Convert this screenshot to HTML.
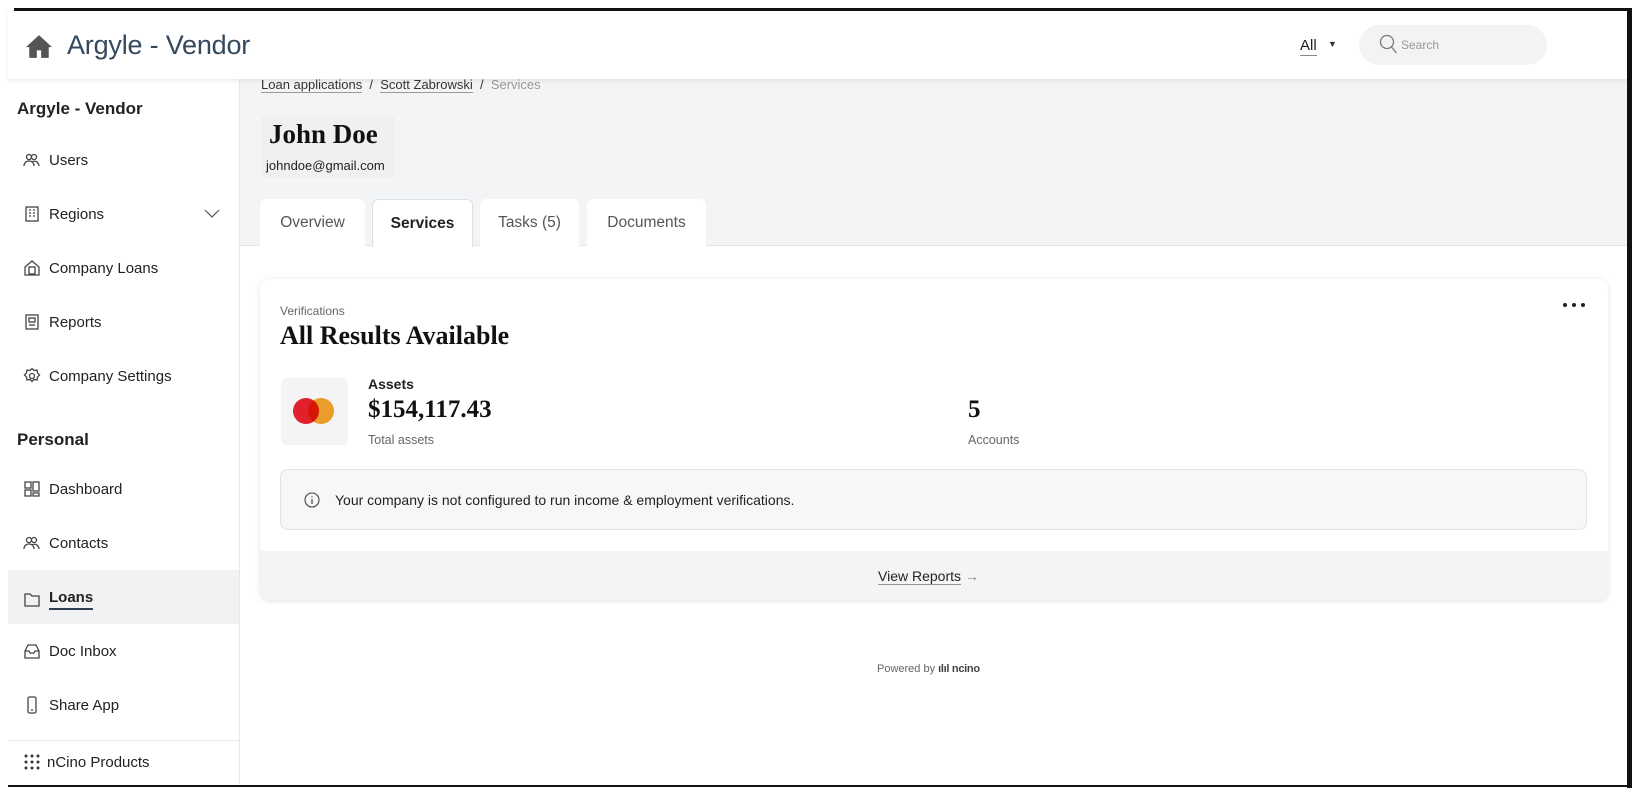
<!DOCTYPE html>
<html><head><meta charset="utf-8"><style>
*{box-sizing:border-box;margin:0;padding:0}
body{width:1640px;height:796px;background:#fff;font-family:"Liberation Sans",sans-serif;color:#222;position:relative;overflow:hidden}
.abs{position:absolute}
.frameT{left:14px;top:8px;width:1618px;height:3px;background:#111}
.frameR{left:1627px;top:8px;width:5px;height:780px;background:#111}
.frameB{left:8px;top:785px;width:1624px;height:2px;background:#111}
.header{left:8px;top:11px;width:1619px;height:68px;background:#fff;box-shadow:0 2px 4px rgba(0,0,0,.08);z-index:3}
.side{left:8px;top:79px;width:232px;height:706px;background:#fff;border-right:1px solid #e8e8e8;z-index:2}
.main{left:240px;top:79px;width:1387px;height:706px;background:#fff}
.gray{left:240px;top:79px;width:1387px;height:167px;background:#f3f4f6;border-bottom:1px solid #e2e4e8}
.si{position:absolute;left:15px;font-size:15px;color:#222;display:flex;align-items:center;gap:8px}
.si svg{width:18px;height:18px;fill:none;stroke:#444;stroke-width:1.3}
.tab{position:absolute;top:199px;height:47px;background:#fff;border-radius:6px 6px 0 0;font-size:15.5px;color:#555;display:flex;align-items:center;justify-content:center}
.card{left:260px;top:279px;width:1348px;height:321px;background:#fff;border-radius:10px;box-shadow:0 1px 6px rgba(0,0,0,.12);overflow:hidden}
.serif{font-family:"Liberation Serif",serif;font-weight:bold}
</style></head><body>
<div class="abs main"></div>
<div class="abs gray"></div>
<div class="abs header">
  <svg class="abs" style="left:18px;top:23px" width="26" height="24" viewBox="0 0 24 22"><path d="M12 1L0 12h3v10h7v-7h4v7h7V12h3z" fill="#555"/></svg>
  <div class="abs" style="left:59px;top:19px;font-size:27px;color:#34495e;font-weight:300;letter-spacing:-.2px">Argyle - Vendor</div>
  <div class="abs" style="left:1292px;top:26px;font-size:15px;color:#222;border-bottom:1px solid #888;line-height:18px">All</div>
  <div class="abs" style="left:1320px;top:28px;font-size:9px;color:#333">▼</div>
  <div class="abs" style="left:1351px;top:14px;width:188px;height:40px;background:#f3f3f3;border-radius:20px"></div>
  <svg class="abs" style="left:1371px;top:23px" width="20" height="22" viewBox="0 0 20 22"><circle cx="8" cy="8" r="6.5" fill="none" stroke="#777" stroke-width="1.3"/><path d="M12.5 13l5 6" stroke="#777" stroke-width="1.3"/></svg>
  <div class="abs" style="left:1393px;top:27px;font-size:12px;color:#999">Search</div>
</div>
<div class="abs side">
  <div class="abs" style="left:9px;top:20px;font-size:17px;font-weight:bold;color:#222">Argyle - Vendor</div>
  <div class="si" style="top:72px"><svg viewBox="0 0 18 18"><circle cx="6" cy="6" r="2.5"/><circle cx="11" cy="6" r="2.5"/><path d="M1 15c0-3 2-5 5-5s5 2 5 5M9 11c1-1 4-1 5 0s2 2 2 4"/></svg>Users</div>
  <div class="si" style="top:126px"><svg viewBox="0 0 18 18"><rect x="3" y="2" width="12" height="14"/><path d="M6 5h2M10 5h2M6 8h2M10 8h2M6 11h2M10 11h2"/></svg>Regions</div>
  <svg class="abs" style="left:196px;top:130px" width="16" height="10" viewBox="0 0 16 10"><path d="M1 1l7 7 7-7" fill="none" stroke="#555" stroke-width="1.2"/></svg>
  <div class="si" style="top:180px"><svg viewBox="0 0 18 18"><path d="M2 8l7-6 7 6v8H2z"/><rect x="6" y="8" width="6" height="7"/></svg>Company Loans</div>
  <div class="si" style="top:234px"><svg viewBox="0 0 18 18"><rect x="3" y="2" width="12" height="14"/><rect x="6" y="5" width="6" height="4"/><path d="M6 12h6"/></svg>Reports</div>
  <div class="si" style="top:288px"><svg viewBox="0 0 18 18"><circle cx="9" cy="9" r="2.5"/><path d="M9 1.5l2 2 3-.5.5 3 2 2-2 2-.5 3-3-.5-2 2-2-2-3 .5-.5-3-2-2 2-2 .5-3 3 .5z"/></svg>Company Settings</div>
  <div class="abs" style="left:9px;top:351px;font-size:17px;font-weight:bold;color:#222">Personal</div>
  <div class="si" style="top:401px"><svg viewBox="0 0 18 18"><rect x="2" y="2" width="6" height="6"/><rect x="10" y="2" width="6" height="9"/><rect x="2" y="10" width="6" height="6"/><rect x="10" y="13" width="6" height="3"/></svg>Dashboard</div>
  <div class="si" style="top:455px"><svg viewBox="0 0 18 18"><circle cx="6" cy="6" r="2.5"/><circle cx="11" cy="6" r="2.5"/><path d="M1 15c0-3 2-5 5-5s5 2 5 5M9 11c1-1 4-1 5 0s2 2 2 4"/></svg>Contacts</div>
  <div class="abs" style="left:0;top:491px;width:231px;height:54px;background:#f1f2f4"></div>
  <div class="si" style="top:509px"><svg viewBox="0 0 18 18"><path d="M2 4h5l2 2h7v10H2z"/></svg><span style="font-weight:bold;border-bottom:2px solid #2c3e50;line-height:20px">Loans</span></div>
  <div class="si" style="top:563px"><svg viewBox="0 0 18 18"><path d="M2 9v7h14V9l-3-6H5zM2 9h4l1 2h4l1-2h4"/></svg>Doc Inbox</div>
  <div class="si" style="top:617px"><svg viewBox="0 0 18 18"><rect x="5" y="1" width="8" height="16" rx="1.5"/><path d="M8 14h2"/></svg>Share App</div>
  <div class="abs" style="left:0;top:661px;width:231px;height:1px;background:#e5e5e5"></div>
  <div class="si" style="top:674px;gap:6px"><svg viewBox="0 0 18 18" style="stroke:none;fill:#333"><circle cx="3" cy="3" r="1.5"/><circle cx="9" cy="3" r="1.5"/><circle cx="15" cy="3" r="1.5"/><circle cx="3" cy="9" r="1.5"/><circle cx="9" cy="9" r="1.5"/><circle cx="15" cy="9" r="1.5"/><circle cx="3" cy="15" r="1.5"/><circle cx="9" cy="15" r="1.5"/><circle cx="15" cy="15" r="1.5"/></svg>nCino Products</div>
</div>
<div class="abs" style="left:261px;top:77px;font-size:13px;color:#333"><span style="border-bottom:1px solid #999">Loan applications</span> &nbsp;/&nbsp; <span style="border-bottom:1px solid #999">Scott Zabrowski</span> &nbsp;/&nbsp; <span style="color:#999">Services</span></div>
<div class="abs" style="left:261px;top:116px;width:134px;height:62px;background:#eef0f2"></div>
<div class="abs serif" style="left:269px;top:119px;font-size:27px;color:#111">John Doe</div>
<div class="abs" style="left:266px;top:158px;font-size:13px;color:#222">johndoe@gmail.com</div>
<div class="tab" style="left:260px;width:105px">Overview</div>
<div class="tab" style="left:372px;width:101px;border:1px solid #dde0e4;border-bottom:none;height:48px;color:#222;font-weight:bold">Services</div>
<div class="tab" style="left:480px;width:99px">Tasks (5)</div>
<div class="tab" style="left:587px;width:119px">Documents</div>
<div class="abs card">
  <div class="abs" style="left:20px;top:25px;font-size:12px;color:#666">Verifications</div>
  <div class="abs serif" style="left:20px;top:42px;font-size:26px;color:#111">All Results Available</div>
  <div class="abs" style="left:1303px;top:24px;width:22px;height:6px;display:flex;justify-content:space-between"><i style="width:4px;height:4px;border-radius:50%;background:#222"></i><i style="width:4px;height:4px;border-radius:50%;background:#222"></i><i style="width:4px;height:4px;border-radius:50%;background:#222"></i></div>
  <div class="abs" style="left:21px;top:99px;width:67px;height:67px;background:#f4f4f4;border-radius:6px"></div>
  <div class="abs" style="left:33px;top:119px;width:26px;height:26px;border-radius:50%;background:#e0202a"></div>
  <div class="abs" style="left:48px;top:119px;width:26px;height:26px;border-radius:50%;background:#f5a42a;mix-blend-mode:multiply"></div>
  <div class="abs" style="left:108px;top:97px;font-size:14px;font-weight:bold">Assets</div>
  <div class="abs serif" style="left:108px;top:117px;font-size:25px;color:#111">$154,117.43</div>
  <div class="abs" style="left:108px;top:154px;font-size:12.5px;color:#666">Total assets</div>
  <div class="abs serif" style="left:708px;top:117px;font-size:25px;color:#111">5</div>
  <div class="abs" style="left:708px;top:154px;font-size:12.5px;color:#666">Accounts</div>
  <div class="abs" style="left:20px;top:190px;width:1307px;height:61px;background:#f7f7f7;border:1px solid #e3e3e3;border-radius:8px"></div>
  <svg class="abs" style="left:44px;top:213px" width="16" height="16" viewBox="0 0 16 16"><circle cx="8" cy="8" r="7" fill="none" stroke="#444" stroke-width="1.1"/><path d="M8 7v5M8 4.3v1" stroke="#444" stroke-width="1.2"/></svg>
  <div class="abs" style="left:75px;top:213px;font-size:14px;color:#222">Your company is not configured to run income &amp; employment verifications.</div>
  <div class="abs" style="left:0;top:272px;width:1348px;height:49px;background:#f3f4f6"></div>
  <div class="abs" style="left:618px;top:289px;font-size:14px;color:#222"><span style="border-bottom:1px solid #999">View Reports</span> <span style="color:#888">→</span></div>
</div>
<div class="abs" style="left:877px;top:663px;font-size:11px;color:#666">Powered by <b style="color:#444;letter-spacing:-.3px">ılıl ncino</b></div>
<div class="abs frameT"></div><div class="abs frameR"></div><div class="abs frameB"></div>
</body></html>
